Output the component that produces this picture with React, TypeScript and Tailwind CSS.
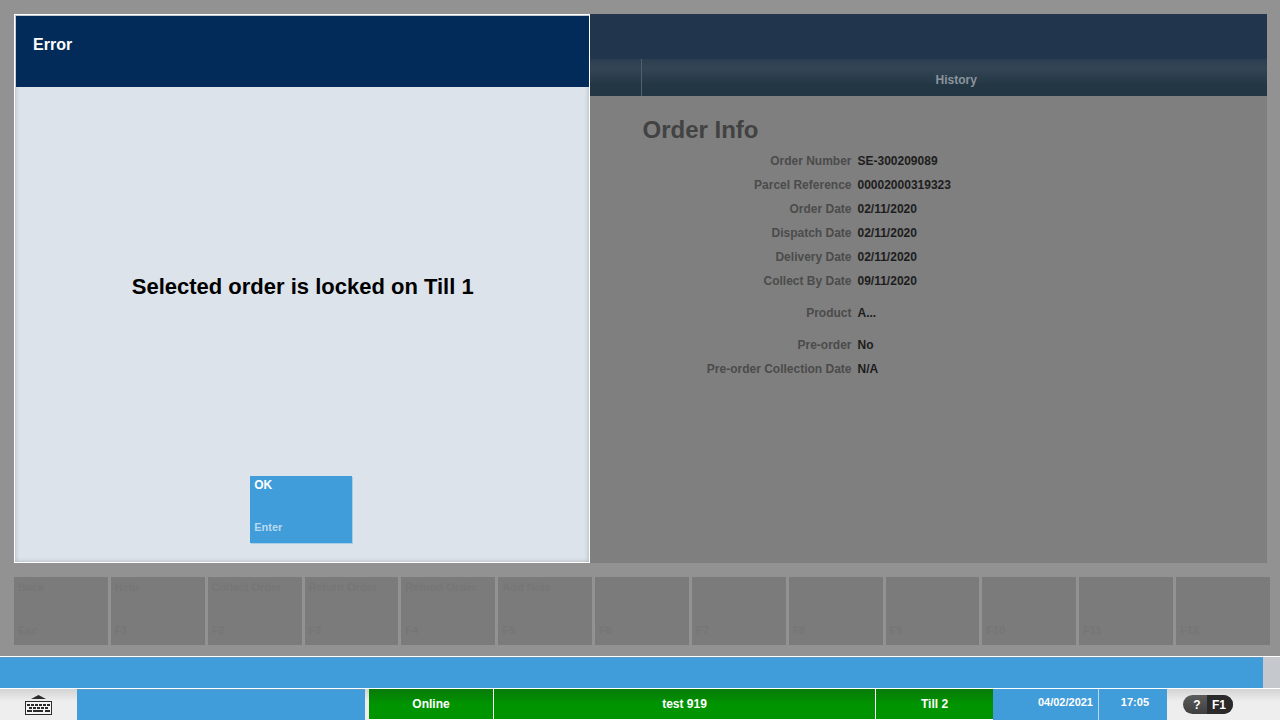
type Field = { label: string; value: string };

const fieldGroups: Field[][] = [
  [
    { label: "Order Number", value: "SE-300209089" },
    { label: "Parcel Reference", value: "00002000319323" },
    { label: "Order Date", value: "02/11/2020" },
    { label: "Dispatch Date", value: "02/11/2020" },
    { label: "Delivery Date", value: "02/11/2020" },
    { label: "Collect By Date", value: "09/11/2020" },
  ],
  [{ label: "Product", value: "A..." }],
  [
    { label: "Pre-order", value: "No" },
    { label: "Pre-order Collection Date", value: "N/A" },
  ],
];

const functionKeys = [
  { name: "Back", hint: "Esc" },
  { name: "Help", hint: "F1" },
  { name: "Collect Order", hint: "F2" },
  { name: "Return Order", hint: "F3" },
  { name: "Refund Order", hint: "F4" },
  { name: "Add Note", hint: "F5" },
  { name: "", hint: "F6" },
  { name: "", hint: "F7" },
  { name: "", hint: "F8" },
  { name: "", hint: "F9" },
  { name: "", hint: "F10" },
  { name: "", hint: "F11" },
  { name: "", hint: "F12" },
];

function KeyboardIcon() {
  return (
    <svg width="27" height="20" viewBox="0 0 27 20" shapeRendering="crispEdges" aria-hidden="true">
      <path d="M6 4 13.5 0 21 4Z" fill="#2b2b2b" shapeRendering="auto" />
      <rect x="0.5" y="6.5" width="26" height="13" fill="#f4f4f4" stroke="#2b2b2b" />
      <path d="M2 10H25" stroke="#2b2b2b" strokeWidth="2" strokeDasharray="3 1" />
      <path d="M4 13H23" stroke="#2b2b2b" strokeWidth="2" strokeDasharray="3 1" />
      <path d="M2 16H7M8 16H18M20 16H25" stroke="#2b2b2b" strokeWidth="2" />
    </svg>
  );
}

function OrderPanel() {
  return (
    <main className="flex flex-1 flex-col bg-[#7f7f7f]">
      <header className="h-[45px] bg-[#21354d]" />
      <nav className="grid h-[37px] grid-cols-2">
        <span className="bg-linear-to-b from-[#2b3e51] via-[#344655] via-25% to-[#233644] to-70%" />
        <button className="border-l border-[#506071] bg-linear-to-b from-[#2b3e51] via-[#344655] via-25% to-[#233644] to-70% pt-[5px] pl-1 text-xs leading-4 font-bold text-[#8a949c]">
          History
        </button>
      </nav>
      <section className="ml-[50%] flex flex-col gap-2 pt-[18px] pl-[2px]">
        <h1 className="text-2xl leading-8 font-bold text-[#424242]">Order Info</h1>
        {fieldGroups.map((group, i) => (
          <dl key={i} className={i === 0 ? "-mt-[5px]" : ""}>
            {group.map((field) => (
              <div key={field.label} className="flex h-6 items-center gap-[6px] text-xs leading-4 font-bold">
                <dt className="w-[209px] text-right text-[#4b4b4b]">{field.label}</dt>
                <dd className="text-[#1d1d1d]">{field.value}</dd>
              </div>
            ))}
          </dl>
        ))}
      </section>
    </main>
  );
}

function ErrorDialog() {
  return (
    <div
      role="alertdialog"
      aria-labelledby="error-title"
      aria-describedby="error-message"
      className="absolute inset-y-0 left-0 flex w-[46%] flex-col border border-white bg-[#dce3ea] shadow-[inset_0_0_4px_#a3abb4]"
    >
      <div className="mt-px ml-px h-[71px] bg-[#022b59] px-[17px] pt-[19px]">
        <h2 id="error-title" className="text-base leading-5 font-bold text-white">
          Error
        </h2>
      </div>
      <p
        id="error-message"
        className="flex flex-1 items-center justify-center pt-[10px] pl-px text-[22px] leading-7 font-bold text-black"
      >
        Selected order is locked on Till 1
      </p>
      <button className="mr-[2px] mb-[19px] flex h-[67px] w-[102px] flex-col justify-between self-center bg-[#419cda] px-1 pt-px pb-2 text-left text-[11px] leading-4 font-bold text-white shadow-[1px_1px_0_#a9cde8]">
        <span className="text-xs leading-4">OK</span>
        <span className="text-[#b9d9f0]">Enter</span>
      </button>
    </div>
  );
}

function FunctionKeys() {
  return (
    <div className="mr-[10px] mb-[11px] ml-[14px] grid h-[68px] grid-cols-13 gap-[3px]">
      {functionKeys.map((key) => (
        <button
          key={key.hint}
          className="flex min-w-0 flex-col justify-between bg-[#7b7b7b] px-1 pt-[2px] pb-[7px] text-left text-[11px] leading-4 font-bold whitespace-nowrap text-[#767676]"
        >
          <span className="h-4">{key.name}</span>
          <span>{key.hint}</span>
        </button>
      ))}
    </div>
  );
}

const greenCell = "flex items-center justify-center bg-linear-to-b from-[#087a08] to-[#009400] to-50%";

function StatusBar() {
  return (
    <footer className="flex h-[31px] bg-linear-to-b from-[#d3d3d3] to-[#eeeeee] to-40% text-xs leading-4 font-bold text-white">
      <button aria-label="Show keyboard" className="flex w-[77px] items-center justify-center">
        <KeyboardIcon />
      </button>
      <div className="w-[22.5%] border-t border-[#5b9cc9] bg-[#419cda]" />
      <div className="ml-1 flex flex-1 gap-px border-b border-white bg-white">
        <span className={`${greenCell} w-[124px]`}>Online</span>
        <span className={`${greenCell} flex-1`}>test 919</span>
        <span className={`${greenCell} w-[117px]`}>Till 2</span>
      </div>
      <div className="flex gap-px bg-[#b5d9f2] text-[11px]">
        <span className="w-[105px] bg-[#419cda] pt-[5px] pr-[5px] text-right">04/02/2021</span>
        <span className="w-[68px] bg-[#419cda] pt-[5px] pr-[18px] text-right">17:05</span>
      </div>
      <div className="flex w-[113px] items-center pl-4">
        <button className="flex h-[19px] w-[50px] items-center overflow-hidden rounded-full bg-linear-to-b from-[#5c5c5c] to-[#3f3f3f] text-xs leading-4">
          <span className="flex-1 pl-1 text-center">?</span>
          <span className="flex h-full w-[26px] items-center bg-[#2a2a2a] pl-[5px]">F1</span>
        </button>
      </div>
    </footer>
  );
}

export default function App() {
  return (
    <div className="flex min-h-screen flex-col bg-[#929292] font-['Liberation_Sans',Arial,sans-serif]">
      <div className="relative mt-[14px] mr-[13px] mb-[14px] ml-[14px] flex flex-1 flex-col">
        <OrderPanel />
        <ErrorDialog />
      </div>
      <FunctionKeys />
      <div className="flex h-8 border-t border-white bg-[#c5c9ce]">
        <div className="mr-[17px] flex-1 border-t border-[#5c98c1] bg-[#419cda]" />
      </div>
      <div className="h-px bg-white" />
      <StatusBar />
    </div>
  );
}
